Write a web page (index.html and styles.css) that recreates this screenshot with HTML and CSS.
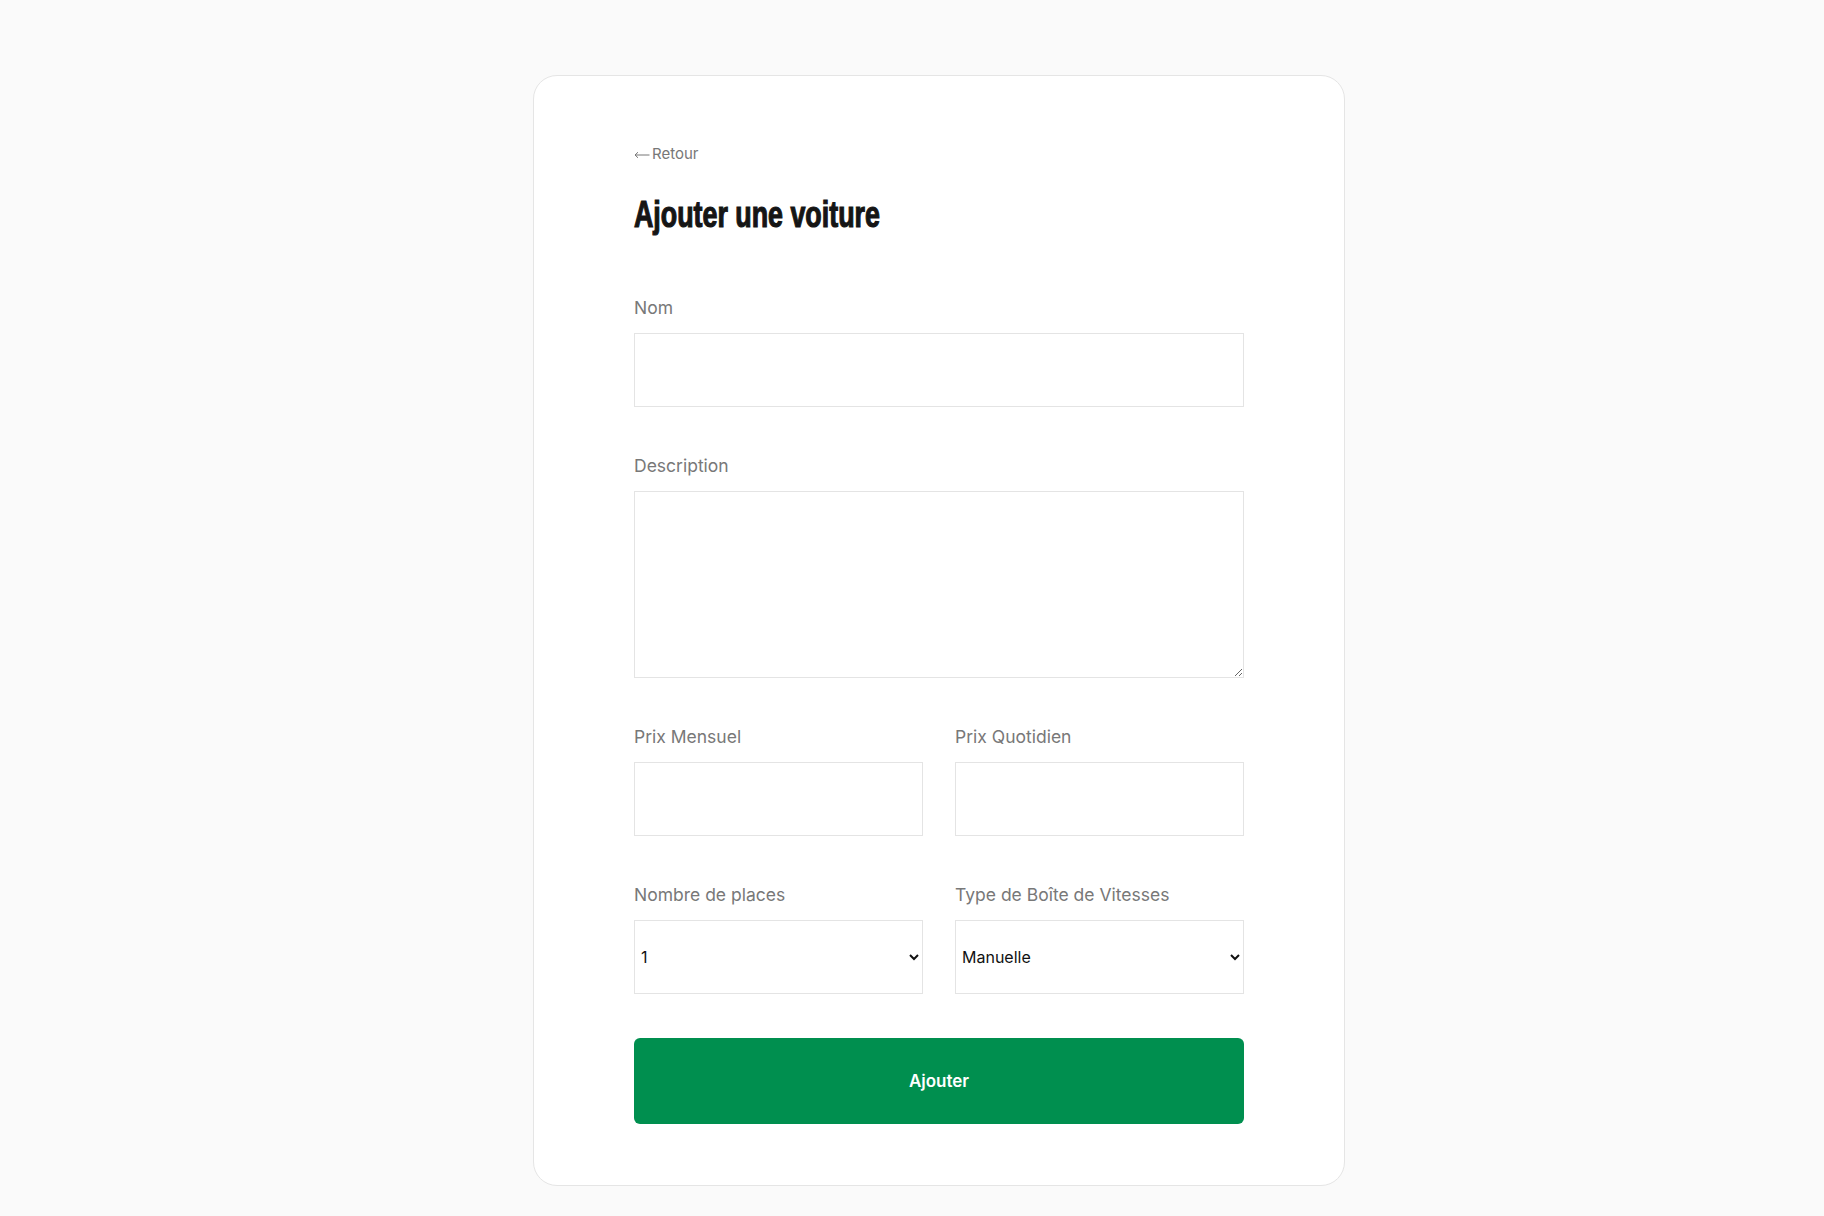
FILE: index.html
```html
<!DOCTYPE html>
<html>
<head>
  <title>Ajouter une voiture</title>
  <meta charset="UTF-8">
  <meta name="viewport" content="width=device-width, initial-scale=1.0">
  <link rel="stylesheet" href="styles.css">
</head>
<body>
<div class="card">
  <a class="back" href="#">
    <svg class="back-arrow" width="16" height="8" viewBox="0 0 16 8">
      <path d="M15.5 4H1M4 1.2L1 4l3 2.8" fill="none" stroke="#777" stroke-width="1"/>
    </svg>
    Retour
  </a>
  <h1 class="title">Ajouter une voiture</h1>

  <form class="car-form">
    <div class="field">
      <label for="nom">Nom</label>
      <input type="text" id="nom" class="input">
    </div>

    <div class="field">
      <label for="description">Description</label>
      <textarea id="description" class="input textarea"></textarea>
    </div>

    <div class="row">
      <div class="field">
        <label for="prixMensuel">Prix Mensuel</label>
        <input type="text" id="prixMensuel" class="input">
      </div>
      <div class="field">
        <label for="prixQuotidien">Prix Quotidien</label>
        <input type="text" id="prixQuotidien" class="input">
      </div>
    </div>

    <div class="row row-last">
      <div class="field">
        <label for="places">Nombre de places</label>
        <select id="places" class="input select">
          <option>1</option>
          <option>2</option>
          <option>3</option>
          <option>4</option>
          <option>5</option>
        </select>
      </div>
      <div class="field">
        <label for="boite">Type de Boîte de Vitesses</label>
        <select id="boite" class="input select">
          <option>Manuelle</option>
          <option>Automatique</option>
        </select>
      </div>
    </div>

    <button type="submit" class="submit">Ajouter</button>
  </form>
</div>
</body>
</html>
```

FILE: styles.css
```css
body {
  background-color: #fafafa;
  font-family: "Inter", "Liberation Sans", sans-serif;
  margin: 0;
  padding: 75px 0 29px 533px;
}

.card {
  width: 610px;
  background-color: #fff;
  border: 1px solid #e5e5e5;
  border-radius: 24px;
  padding: 68px 100px 61px 100px;
}

.back {
  display: flex;
  align-items: center;
  gap: 2px;
  font-size: 15px;
  line-height: 20px;
  color: #777;
  text-decoration: none;
}

.back-arrow {
  margin-top: 2px;
}

.title {
  display: inline-block;
  font-family: "Liberation Sans", Arial, sans-serif;
  font-weight: 700;
  font-size: 36px;
  line-height: 44px;
  color: #151515;
  margin: 29px 0 60px 0;
  -webkit-text-stroke: 1.2px #151515;
  transform: scaleX(0.745);
  transform-origin: left center;
}

.car-form {
  display: flex;
  flex-direction: column;
}

.field {
  display: flex;
  flex-direction: column;
  margin-bottom: 48px;
}

.field label {
  font-size: 17.5px;
  line-height: 22px;
  color: #787878;
  margin-bottom: 14px;
}

.input {
  box-sizing: border-box;
  height: 74px;
  border: 1px solid #e4e4e4;
  background-color: #fff;
  border-radius: 0;
  outline: none;
}

.textarea {
  height: 187px;
}

.select {
  padding: 0 2px;
  font-family: "Inter", "Liberation Sans", sans-serif;
  font-size: 16px;
  color: #111;
}

.row {
  display: grid;
  grid-template-columns: 1fr 1fr;
  gap: 32px;
}

.row-last .field {
  margin-bottom: 44px;
}

.submit {
  display: block;
  width: 100%;
  height: 86px;
  border: none;
  border-radius: 6px;
  background-color: #008f4f;
  color: #fff;
  font-family: "Inter", "Liberation Sans", sans-serif;
  font-weight: 600;
  font-size: 17px;
}
```
